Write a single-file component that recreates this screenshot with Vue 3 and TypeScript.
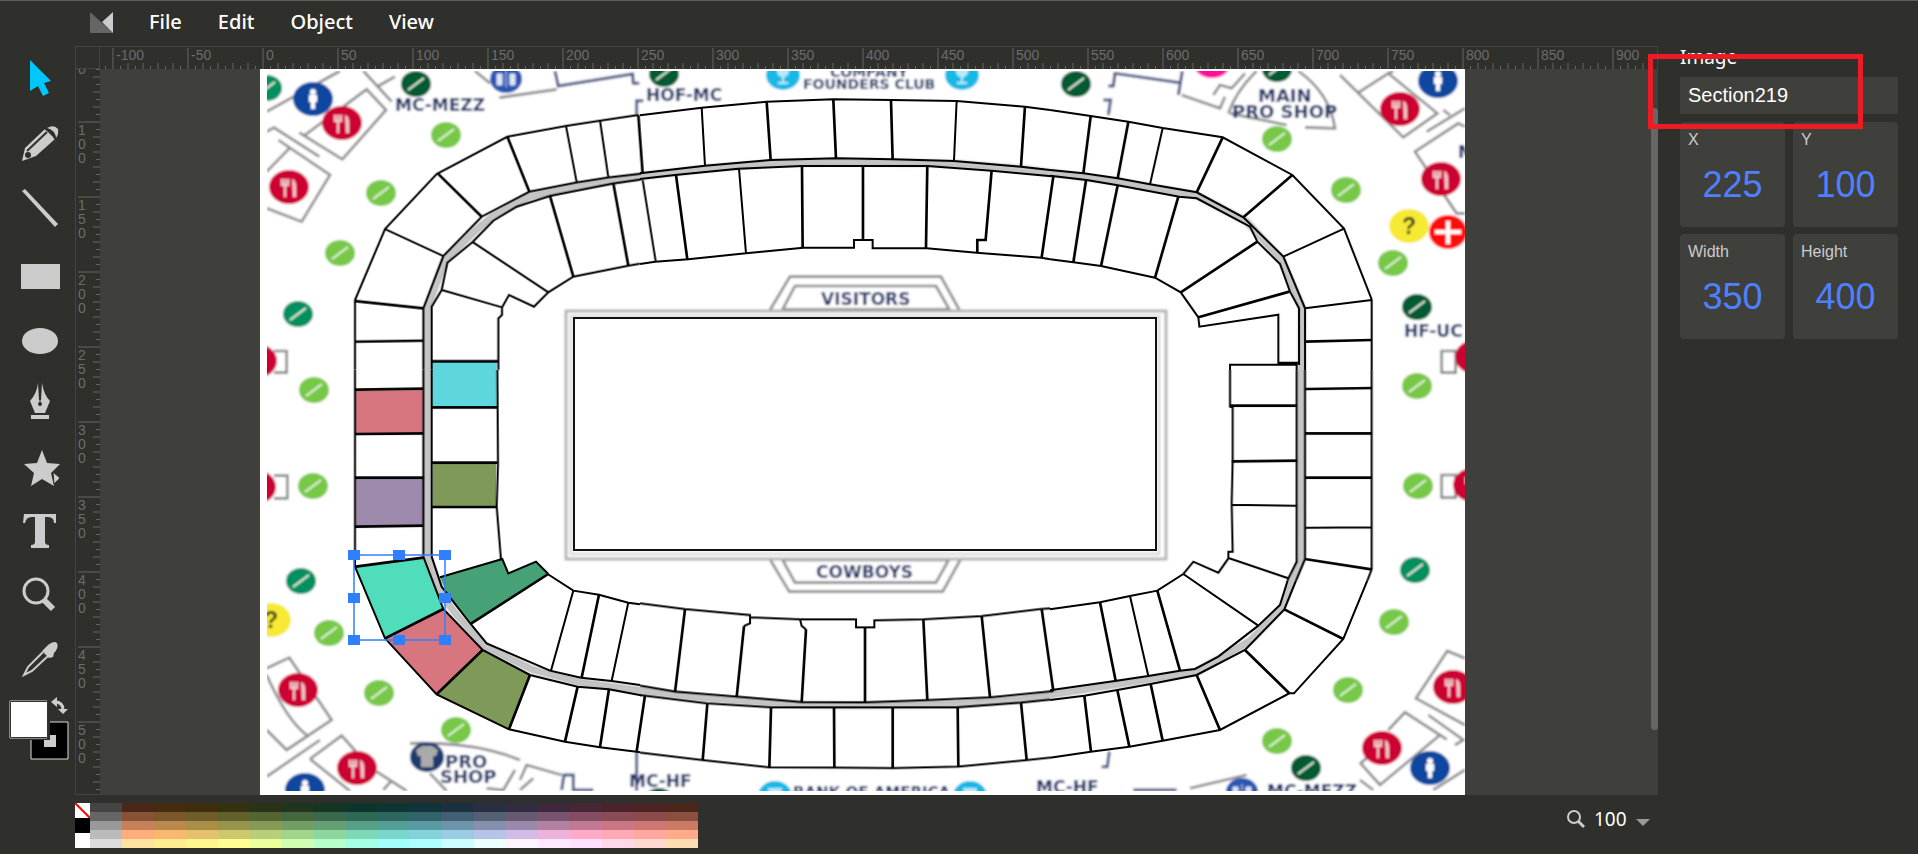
<script setup lang="ts">
import { ref } from 'vue'

interface Layer { x: number; y: number; thin?: string; bold?: string; aisle?: string; wall?: string; navy?: string }
interface Fill { x: number; y: number; color: string; points: string }
interface Label { x: number; y: number; size: number; text: string }

const menus = ['File', 'Edit', 'Object', 'View']
const tools = ['Select', 'Pencil', 'Line', 'Rectangle', 'Ellipse', 'Pen', 'Star', 'Text', 'Zoom', 'Eyedropper']
const active = ref('Select')
const title = ref('Section219')
const zoom = ref('100')
const fields = ref([
  { id: 'pos-x', label: 'X', value: '225' },
  { id: 'pos-y', label: 'Y', value: '100' },
  { id: 'size-w', label: 'Width', value: '350' },
  { id: 'size-h', label: 'Height', value: '400' }
])

const ticks = (from: number, to: number) => {
  const list: { v: number; kind: number }[] = []
  for (let v = from; v <= to; v += 5) list.push({ v, kind: v % 50 === 0 ? 2 : v % 10 === 0 ? 1 : 0 })
  return list
}
const acrossTicks = ticks(-105, 920)
const downTicks = ticks(50, 590)
const tickLength = [4, 7, 22]

const palette = [
  '#444 #4a2819 #462b10 #3e2e0f #34310f #2a3316 #20351d #173524 #0e352b #0d3532 #0f343a #1b3140 #282f41 #322c41 #40283c #472635 #4b242b #4c2424 #4b261a',
  '#666 #875236 #7d572c #705b2a #62602b #546432 #44673e #39684a #2f6855 #2f6660 #33636a #425f75 #546073 #655a72 #775470 #834e64 #8a4b57 #8d4a4c #8a4f3f',
  '#999 #c6815a #b9884c #a98e48 #98944b #869955 #739d65 #649f76 #589f87 #539e97 #5a9aa3 #6d95aa #8490ad #9a89ab #b081a1 #c17a93 #ca7784 #cd7775 #cb7b65',
  '#bbb #ffae7b #f9b76f #e6c16c #cec86d #b9ce79 #a1d589 #8cd79d #7dd8b5 #79d6cb #84d2da #9acce5 #b6c4e8 #d2bbe6 #ecb2da #ffaac8 #ffa8b6 #ffa8a0 #ffaa88',
  '#ddd #ffe3a0 #ffed90 #fff78d #fffe93 #ecff9d #d0ffb1 #b8ffcb #a6ffe5 #a2fffe #affffe #ccfeff #ecffff #fff4ff #ffe9ff #ffe0ff #ffd8e9 #ffd9cf #ffddb3'
].join(' ').split(' ')

const layers: Layer[] = [
  {
    x: 260, y: 60,
    thin: 'M285 930V720L375 507L530 342L742 230L918 198L1020 182L1135 165M490 930V745L550 588L665 470L808 395L950 367L1045 352L1143 341M375 507L550 588M918 198L950 367M1020 182L1045 352M515 930V740L545 690L562 608L638 546L700 482L770 440L870 408L1060 370L1143 358M715 930V775L726 765V742L747 705L822 740L865 697L940 650L1105 617L1140 611M545 690L726 742M638 546L865 697M1148 360L1187 604',
    bold: 'M285 723L490 745M285 845L490 842M535 342L665 470M742 230L808 395M1135 165L1148 341M870 408L940 650M1060 370L1105 617M515 904H715',
    aisle: 'M502 930V745L555 600L650 508L700 468L808 410L950 380L1140 351',
    wall: 'M20 155L240 33M135 225L320 88L378 150L247 298L118 218M310 33L395 125M355 78L405 50M20 215L42 203L178 290M55 240L210 345L125 485L20 445M88 265L20 335M718 113L890 88M645 33L690 70M42 873h38v65h-38',
    navy: 'M885 33L895 78L1118 42L1120 70H1138M1150 122H1130V165'
  },
  {
    x: 640, y: 60,
    thin: 'M0 166L185 143L380 125L580 118L755 120L950 123L1155 140L1230 150M0 340L195 317L392 300L590 295L758 298L942 303L1143 320L1230 330M0 357L105 345L295 326L485 318H862L1055 332L1235 349M0 612L45 605L145 598L318 580L490 563H642V540H698V565H860L1010 578L1205 593L1230 598M185 143L195 317M297 326L318 580M950 123L942 303',
    bold: 'M380 125L392 300M580 118L588 295M753 120L758 298M1155 140L1143 320M108 345L142 598M486 318L488 563M669 318V540M862 318L858 567M1055 332L1037 540H1012V578M1240 350L1205 593',
    aisle: 'M0 349L195 326L392 310L590 306L758 308L942 311L1143 327L1230 338',
    wall: 'M390 750L450 650H903L958 750M428 748L465 678H888L928 748Z'
  },
  {
    x: 1050, y: 60,
    thin: 'M0 150L122 168L235 185L338 204L518 232L727 345L882 506L965 718V930M0 330L100 340L203 355L300 373L440 397L580 472L700 590L765 745V930M338 204L300 373M882 506L700 590M965 720L765 745M0 347L110 360L203 376L388 410L440 415L600 500L622 545L690 612L720 695L747 745V915M0 598L70 607L153 618L315 653L392 697L445 772L448 800L685 764V908H747M540 930V914H740V930',
    bold: 'M122 168L100 340M235 185L203 355M518 232L440 397M727 345L580 472M765 845L965 840M108 360L70 607M203 376L153 618M385 410L315 653M622 545L392 697M718 695L445 772',
    aisle: 'M0 338L203 365L300 382L440 406L590 485L695 600L756 745V930',
    wall: 'M395 105L510 145L525 110M490 105L510 75L545 85L585 40M535 160Q560 90 620 33M745 33Q840 100 855 205L765 202M710 195L540 160M870 45L1060 232L1162 160L1015 40L925 98M1015 40L1030 33M1130 215L1245 145M1180 150L1200 165M1245 200L1225 190L1095 275L1220 460H1245M1175 873h42v65h-42Z',
    navy: 'M175 78H190L195 40L390 68M397 33L385 105M160 120H182L175 165'
  },
  {
    x: 260, y: 370,
    thin: 'M285 0V560M490 0V560M515 0V560M712 0L714 278L710 410L723 570',
    bold: 'M285 59L490 56M285 192L490 190M285 323H492M285 470L490 467M515 112H712M515 278H712M518 411H710',
    aisle: 'M502 0V555',
    wall: 'M42 317h40v68h-40'
  },
  {
    x: 260, y: 560,
    thin: 'M285 -10V20L375 235L530 403L747 508L915 545L1020 562L1130 575L1140 577M490 -10L550 147L668 270L810 345L953 380L1047 388L1143 406M515 -10L545 80L632 192L680 250L870 332L963 353L1055 363L1140 375M863 42L940 92L1017 104L1105 128L1140 133M540 52L727 -3L745 40L828 5L865 42M940 92L873 332M1105 128L1055 363',
    bold: 'M287 20L490 -7M550 147L375 235M668 270L530 403M810 345L747 508M953 380L915 545M1047 388L1020 562M1155 407L1130 575M1017 104L965 353M865 42L632 192',
    aisle: 'M502 -15L545 105L590 165L672 257L815 328L960 367L1140 391',
    wall: 'M20 325L88 293L215 480L80 570L20 510M20 345Q80 480 140 525M20 650L180 540M150 597L245 527L310 600M150 597L270 693M350 635L440 693M370 690L392 665M450 550Q650 545 780 600M510 640L560 693M765 630L730 690L680 685M780 660L800 615L905 645M820 655L780 690',
    navy: 'M905 690L912 645H940V690H1000M1130 575V693'
  },
  {
    x: 640, y: 540,
    thin: 'M0 190L135 207L330 225V250L312 258M332 232L480 238L485 258L498 268M480 238H648V262H703V241L850 238L1025 228L1200 207L1230 205M0 437L105 455L290 470L485 486L675 487L862 480L1050 472L1240 453M0 465L200 490L395 502H950L1143 488L1230 479M0 638L188 660L388 682L585 683L760 684L955 680L1160 660L1230 653',
    bold: 'M135 207L105 455M312 258L290 470M498 268L485 486M675 260V487M850 238L862 480M1025 228L1050 472M1205 207L1240 453M202 490L188 660M393 502L388 682M582 502L583 683M758 502V684M953 502L955 680M1143 488L1160 660',
    aisle: 'M0 451L200 475L485 494L675 496L950 492L1143 478L1230 466',
    wall: 'M390 58L448 155H908L962 58M428 60L465 128H888L926 60Z'
  },
  {
    x: 1050, y: 370,
    thin: 'M540 0V110L548 112V270L545 400L548 545H535V565L505 608L430 575L400 612M740 0V575L715 625L713 632M765 0V567L738 632M965 0V598L952 632M765 473L965 472M545 404L740 407M538 565L715 625',
    bold: 'M540 107H740M545 274L740 272M765 57L965 54M765 190H965M765 323H965M765 567L965 598',
    aisle: 'M753 0V570L727 632',
    wall: 'M1175 315h42v68h-42Z'
  },
  {
    x: 1050, y: 570,
    thin: 'M952 32L880 207L732 370H718L510 480L338 512L238 530L122 545L0 563M738 32L703 118L585 240L440 315L302 342L202 360L103 377L0 390M713 32L690 105L625 167L505 260L435 297L390 302L295 318L200 332L0 361M400 12L322 62L240 78L150 97L0 118M400 12L625 167M240 78L295 318',
    bold: 'M703 118L880 207M585 240L718 370M440 315L510 480M302 342L338 512M202 360L238 530M103 377L123 545M322 62L390 302M150 97L197 332',
    aisle: 'M727 32L697 112L600 213L440 306L0 375',
    wall: 'M420 655L590 615M1245 265L1192 243L1098 385L1245 465M1015 480L1065 427L1190 508M1170 495L990 645L932 580L960 555M1135 435L1240 510L1215 525M1245 600L1150 660M930 630L970 660',
    navy: 'M178 545L172 590H155M250 660H380'
  }
]

const fills: Fill[] = [
  { x: 260, y: 370, color: '#5dd6de', points: '515,-26 710,-26 710,108 515,110' },
  { x: 260, y: 370, color: '#d87680', points: '285,62 488,60 488,188 285,190' },
  { x: 260, y: 370, color: '#9e8aad', points: '287,326 492,326 490,467 287,470' },
  { x: 260, y: 370, color: '#7f9a58', points: '518,280 708,280 708,410 518,410' },
  { x: 260, y: 560, color: '#47a176', points: '540,52 727,-3 745,40 828,5 863,42 632,192 560,100' },
  { x: 260, y: 560, color: '#4fddbb', points: '287,20 490,-5 550,147 375,233' },
  { x: 260, y: 560, color: '#d87680', points: '375,233 550,150 668,270 530,403' },
  { x: 260, y: 560, color: '#7f9a58', points: '530,403 670,272 810,345 747,508' }
]

const light = '#78c846'
const mid = '#028f5f'
const dark = '#035a33'
const gates: [number, number, string][] = [
  [446, 135, light], [381, 193, light], [340, 253, light], [314, 390, light], [313, 486, light], [329, 633, light],
  [379, 693, light], [456, 730, light], [1277, 139, light], [1346, 190, light], [1393, 263, light], [1417, 386, light],
  [1418, 486, light], [1394, 622, light], [1348, 690, light], [1277, 741, light],
  [298, 314, mid], [301, 581, mid], [1415, 570, mid], [267, 88, mid],
  [416, 84, dark], [664, 74, dark], [1076, 84, dark], [1277, 69, dark], [1417, 307, dark], [1306, 768, dark], [659, 801, dark]
]
const food: [number, number][] = [
  [342, 123], [289, 187], [1400, 109], [1441, 179], [298, 690], [357, 768], [1453, 687], [1382, 748],
  [257, 361], [256, 487], [1475, 357], [1473, 485]
]
const people: [number, number][] = [[313, 99], [1438, 81], [305, 790], [1430, 768]]
const family: [number, number][] = [[506, 79], [1242, 792]]
const cups: [number, number][] = [[783, 75], [962, 75], [775, 796], [970, 796]]
const help: [number, number][] = [[1409, 226], [271, 620]]
const labels: Label[] = [
  { x: 395, y: 111, size: 17, text: 'MC-MEZZ' },
  { x: 646, y: 101, size: 17, text: 'HOF-MC' },
  { x: 830, y: 77, size: 14, text: 'COMPANY' },
  { x: 803, y: 89, size: 14, text: 'FOUNDERS CLUB' },
  { x: 1258, y: 102, size: 18, text: 'MAIN' },
  { x: 1232, y: 118, size: 18, text: 'PRO SHOP' },
  { x: 1404, y: 337, size: 17, text: 'HF-UC' },
  { x: 1458, y: 158, size: 17, text: 'M' },
  { x: 445, y: 768, size: 18, text: 'PRO' },
  { x: 440, y: 783, size: 18, text: 'SHOP' },
  { x: 629, y: 787, size: 17, text: 'MC-HF' },
  { x: 793, y: 798, size: 15, text: 'BANK OF AMERICA' },
  { x: 1036, y: 793, size: 17, text: 'MC-HF' },
  { x: 1267, y: 797, size: 17, text: 'MC-MEZZ' },
  { x: 821, y: 305, size: 17, text: 'VISITORS' },
  { x: 816, y: 578, size: 17, text: 'COWBOYS' }
]
const handles: [number, number][] = [
  [354, 555], [399, 555], [445, 555], [354, 598], [445, 598], [354, 640], [399, 640], [445, 640]
]
const place = (x: number, y: number) => `translate(${x} ${y}) scale(.3333)`
</script>

<template>
  <div class="editor">
    <nav class="menubar">
      <svg class="logo" viewBox="0 0 23 21" aria-hidden="true">
        <path d="M0 0V21H23Z" fill="#666" /><path d="M23 0V21L12 10Z" fill="#ccc" />
      </svg>
      <button v-for="m in menus" :key="m" type="button">{{ m }}</button>
    </nav>

    <aside class="toolbar">
      <button v-for="(t, i) in tools" :key="t" type="button" class="tool" :class="{ active: active === t }" :aria-label="t" @click="active = t">
        <svg :viewBox="`0 ${46 + i * 64} 75 64`" fill="currentColor">
          <path v-if="i === 0" d="M30 60V91L38 86L43 96L49 93L44 83L51 81Z" />
          <g v-else-if="i === 1">
            <path d="M22 161L25 148L45 129L55 139L36 156Z" />
            <path d="M47 128Q54 124 58 129Q59 134 56 138Q55 130 47 128Z" />
            <path d="M27 151L47 132" fill="none" stroke="#2f2f2c" stroke-width="2" />
            <path d="M45 129Q54 130 55 139" fill="none" stroke="#2f2f2c" stroke-width="2" />
            <circle cx="28" cy="155" r="3" fill="#2f2f2c" />
          </g>
          <path v-else-if="i === 2" d="M22 191L25 189L58 224L55 227Z" />
          <path v-else-if="i === 3" d="M21 264H60V289H21Z" />
          <ellipse v-else-if="i === 4" cx="40" cy="341" rx="18" ry="13" />
          <g v-else-if="i === 5">
            <path d="M38 383L39 400H41L42 383Q44 395 50 401L45 413H35L30 401Q37 393 38 383ZM31 415H49V419H31Z" />
            <path d="M40 385V403" stroke="#2f2f2c" stroke-width="1" /><circle cx="40" cy="404" r="2" fill="#2f2f2c" />
          </g>
          <g v-else-if="i === 6">
            <path d="M42 450L47 463L60 464L51 473L54 486L42 479L31 486L34 473L24 464L37 463Z" />
            <path d="M53 472L60 478L54 484Z" stroke="#2f2f2c" stroke-width="1" />
          </g>
          <path v-else-if="i === 7" d="M24 514H56V523H54Q54 517 48 517H45V542Q45 545 49 545V548H31V545Q35 545 35 542V517H32Q26 517 25 523H23Z" />
          <g v-else-if="i === 8" fill="none" stroke="currentColor">
            <circle cx="36" cy="591" r="12" stroke-width="3" /><path d="M44 600L53 609" stroke-width="6" />
          </g>
          <g v-else>
            <path d="M42 651L48 645Q54 640 57 643Q59 648 54 653L53 657L49 658L40 649Z" />
            <path d="M43 652L28 667L24 675L32 671L48 656" fill="none" stroke="currentColor" stroke-width="2" />
          </g>
        </svg>
      </button>
      <svg class="swatches" viewBox="0 686 75 80" role="img" aria-label="Fill and stroke colours">
        <path d="M31 722H68V759H31Z" stroke="#ddd" /><path d="M44 735H56V747H44Z" fill="#ccc" />
        <path d="M8 699H50V740H8Z" fill="#2f2f2c" />
        <path d="M10 701H47V738H10Z" fill="#fff" stroke="#ddd" /><path d="M10.5 701.5H47.500V737.500H10.500Z" fill="#fff" stroke="#333" stroke-width="1" />
        <path d="M55 702Q63 702 63 710" fill="none" stroke="#ccc" stroke-width="3" /><path d="M51 702L57 697V707ZM58 709H68L63 714Z" fill="#ccc" />
      </svg>
    </aside>

    <main class="workspace">
      <div class="corner"></div>
      <svg class="ruler-x" aria-hidden="true">
        <g v-for="t in acrossTicks" :key="t.v">
          <line :x1="163 + t.v * 1.5" :x2="163 + t.v * 1.5" :y1="23 - tickLength[t.kind]" y2="24" />
          <text v-if="t.kind === 2" :x="166 + t.v * 1.5" y="13">{{ t.v }}</text>
        </g>
      </svg>
      <svg class="ruler-y" aria-hidden="true">
        <g v-for="t in downTicks" :key="t.v">
          <line :y1="t.v * 1.5 - 97" :y2="t.v * 1.5 - 97" :x1="24 - tickLength[t.kind]" x2="24" />
          <template v-if="t.kind === 2">
            <text v-for="(d, n) in String(t.v)" :key="n" x="2" :y="t.v * 1.5 - 84 + n * 14">{{ d }}</text>
          </template>
        </g>
      </svg>
      <div class="canvas">
        <svg class="artboard" viewBox="260 69 1205 726" role="img" aria-label="Stadium seating map">
          <defs>
            <clipPath id="picture"><rect x="267" y="71" width="1198" height="720" /></clipPath>
            <filter id="soft" x="0" y="0" width="1" height="1"><feGaussianBlur stdDeviation="1" /></filter>
          </defs>
          <rect x="260" y="69" width="1205" height="726" fill="#fff" />
          <g clip-path="url(#picture)">
            <g filter="url(#soft)">
              <rect x="255" y="60" width="1222" height="745" fill="#fff" />
              <g v-for="(l, i) in layers" :key="i" :transform="place(l.x, l.y)" fill="none">
                <path v-if="l.wall" :d="l.wall" stroke="#888" stroke-width="8" />
                <path v-if="l.navy" :d="l.navy" stroke="#4a5685" stroke-width="9" />
              </g>
              <rect x="566" y="311" width="600" height="248" fill="none" stroke="#b4b4b4" stroke-width="3" />
              <rect x="571" y="316" width="588" height="238" fill="none" stroke="#ddd" stroke-width="3" />
              <g v-for="(g, i) in gates" :key="i" :transform="`translate(${g[0]} ${g[1]})`">
                <ellipse rx="15" ry="13" :fill="g[2]" /><path d="M-8 6L8 -6" stroke="#e4f4df" stroke-width="2" />
              </g>
              <g v-for="(p, i) in people" :key="i" :transform="`translate(${p[0]} ${p[1]})`">
                <ellipse rx="20" ry="17" fill="#0f47a0" /><circle cy="-7" r="3" fill="#fff" /><path d="M-4 -4H4V3H2V10H-2V3H-4Z" fill="#fff" />
              </g>
              <g v-for="(p, i) in family" :key="i" :transform="`translate(${p[0]} ${p[1]})`">
                <ellipse rx="16" ry="14" fill="#2a55b0" /><path d="M-9 -5H-4V6H-9ZM4 -5H9V6H4ZM0 -8V8" fill="#dfe8f8" stroke="#dfe8f8" />
              </g>
              <g v-for="(p, i) in food" :key="i" :transform="`translate(${p[0]} ${p[1]})`">
                <ellipse rx="20" ry="17" fill="#cc0033" />
                <path d="M-7 -8V-2H-1V-8M-4 -8V10" stroke="#f5c9d2" stroke-width="2" fill="none" /><path d="M3 -8Q7 -7 7 0V10H4Z" fill="#f5c9d2" />
              </g>
              <g v-for="(p, i) in cups" :key="i" :transform="`translate(${p[0]} ${p[1]})`">
                <ellipse rx="17" ry="15" fill="#13b9e6" /><path d="M-7 -8H7Q6 2 1 2V7H5V9H-5V7H-1V2Q-6 2 -7 -8Z" fill="#b9eaf8" />
              </g>
              <g v-for="(p, i) in help" :key="i" :transform="`translate(${p[0]} ${p[1]})`">
                <ellipse rx="20" ry="17" fill="#f6ea35" /><text class="question" y="8">?</text>
              </g>
              <ellipse cx="1212" cy="64" rx="18" ry="14" fill="#ff0a9c" />
              <ellipse cx="1448" cy="232" rx="19" ry="17" fill="#ff1010" /><path d="M1435 232H1461M1448 221V244" stroke="#fff" stroke-width="4" />
              <ellipse cx="427" cy="757" rx="17" ry="15" fill="#1b3a70" />
              <path d="M416 750L422 746H432L438 750L436 756H433V767H421V756H418Z" fill="#aaa" />
              <text v-for="(l, i) in labels" :key="i" class="place" :x="l.x" :y="l.y" :font-size="l.size">{{ l.text }}</text>
              <g v-for="(l, i) in layers" :key="`a${i}`" :transform="place(l.x, l.y)" fill="none">
                <path :d="l.aisle" stroke="#b4b4b4" stroke-width="22" />
                <path :d="l.aisle" stroke="#cfcfcf" stroke-width="7" />
              </g>
            </g>
            <rect x="574" y="318" width="582" height="232" fill="#fff" stroke="#111" stroke-width="2" />
            <polygon v-for="(f, i) in fills" :key="i" :transform="place(f.x, f.y)" :points="f.points" :fill="f.color" />
            <g v-for="(l, i) in layers" :key="`l${i}`" :transform="place(l.x, l.y)" fill="none" stroke="#000">
              <path :d="l.thin" stroke-width="6" /><path :d="l.bold" stroke-width="8" />
            </g>
          </g>
          <g fill="#2f80ff">
            <rect x="354" y="555" width="91" height="85" fill="none" stroke="#2f80ff" stroke-width="1.500" />
            <rect v-for="(h, i) in handles" :key="i" :x="h[0] - 6" :y="h[1] - 5" width="12" height="10" />
          </g>
        </svg>
        <div class="scrollbar"></div>
      </div>
    </main>

    <section class="panel">
      <h2><label for="title">Image</label></h2>
      <input id="title" v-model="title" class="name" type="text" />
      <div class="cells">
        <div v-for="f in fields" :key="f.id" class="cell">
          <label :for="f.id">{{ f.label }}</label>
          <input :id="f.id" v-model="f.value" type="text" />
        </div>
      </div>
      <div class="callout"></div>
    </section>

    <footer class="bottom">
      <div class="basics">
        <button type="button" class="none" aria-label="No colour"><svg viewBox="0 0 15 15"><path d="M0 0L15 15" stroke="#f00" stroke-width="2" /></svg></button>
        <button type="button" class="black" aria-label="Black"></button>
        <button type="button" class="white" aria-label="White"></button>
      </div>
      <div class="palette">
        <button v-for="(c, i) in palette" :key="i" type="button" :style="{ background: c }" :aria-label="c"></button>
      </div>
      <div class="zoom">
        <label for="zoom" aria-label="Zoom level">
          <svg viewBox="0 0 20 20" fill="none" stroke="#ccc"><circle cx="8" cy="8" r="6" stroke-width="2" /><path d="M12 12L18 18" stroke-width="3" /></svg>
        </label>
        <input id="zoom" v-model="zoom" type="text" />
        <button type="button" aria-label="Zoom presets"><svg viewBox="0 0 14 7"><path d="M0 0H14L7 7Z" fill="#999" /></svg></button>
      </div>
    </footer>
  </div>
</template>

<style>
body { background: #2f2f2c; }
</style>

<style scoped>
.editor {
  box-sizing: border-box;
  display: grid;
  grid-template: 45px minmax(0, 1fr) 59px / 75px minmax(0, 1fr) 260px;
  height: 100vh;
  border-top: 1px solid #5c5e5e;
  background: #2f2f2c;
  color: #fff;
  font-family: "Liberation Sans", sans-serif;
}
button { border: 0; padding: 0; background: none; color: inherit; font: inherit; }
input { box-sizing: border-box; min-width: 0; border: 0; padding: 0; background: none; color: inherit; font: inherit; }
svg { display: block; }
.menubar { grid-column: 1 / -1; display: flex; align-items: center; gap: 36px; padding: 0 0 3px 90px; font: 500 20px/28px "Noto Sans", sans-serif; }
.logo { width: 23px; height: 21px; }
.toolbar { grid-row: 2 / 4; }
.tool { display: block; width: 75px; height: 64px; color: #ccc; }
.tool.active { color: #00c8ff; }
.swatches { width: 75px; height: 80px; }
.workspace { display: grid; grid-template: 23px minmax(0, 1fr) / 25px minmax(0, 1fr); }
.corner { border: 1px solid #444; }
.ruler-x { box-sizing: border-box; width: 100%; height: 23px; border-top: 1px solid #444; border-right: 1px solid #444; font-size: 14px; }
.ruler-y { box-sizing: border-box; width: 25px; height: 100%; border-left: 1px solid #444; border-bottom: 1px solid #444; font-size: 14px; }
.ruler-x line, .ruler-y line { stroke: #666; }
.ruler-x text, .ruler-y text { fill: #6c6c6c; }
.canvas { position: relative; overflow: hidden; background: #3f3f3c; }
.artboard { width: 1205px; margin-left: 160px; }
.scrollbar { position: absolute; right: 0; top: 39px; bottom: 65px; width: 7px; border-radius: 4px; background: #666; }
.place { fill: #1d2f66; font-family: "DejaVu Sans", sans-serif; font-weight: bold; }
.question { fill: #333018; font-size: 23px; font-weight: bold; text-anchor: middle; }
.panel { position: relative; padding: 0 20px 0 22px; }
h2 { margin: 0; height: 31px; font: 19px/22px "Noto Sans", sans-serif; }
.name { width: 100%; height: 37px; padding: 0 8px; background: #3f3f3c; font-size: 20px; }
.cells { display: grid; grid-template-columns: 1fr 1fr; gap: 7px 8px; margin-top: 8px; }
.cell { display: flex; flex-direction: column; height: 105px; border-radius: 4px; background: #3f3f3c; }
.cell label { padding: 8px 8px 0; color: #ccc; font-size: 16px; line-height: 20px; }
.cell input { width: 100%; height: 70px; color: #4f80ff; font-size: 36px; text-align: center; }
.callout { position: absolute; left: -10px; top: 8px; width: 205px; height: 65px; border: 5px solid #ed1c24; pointer-events: none; }
.bottom { grid-column: 2 / 4; display: flex; align-items: flex-start; padding-top: 8px; }
.basics { display: flex; flex-direction: column; width: 15px; }
.basics button { height: 15px; }
.none, .white { background: #fff; }
.black { background: #000; }
.palette { display: grid; grid-template-columns: repeat(19, 32px); grid-auto-rows: 9px; }
.zoom { display: flex; align-items: center; gap: 8px; margin: 2px 268px 0 auto; font: 19px "Noto Sans", sans-serif; }
.zoom input { width: 34px; height: 28px; }
.zoom label svg { width: 20px; height: 20px; }
.zoom button svg { width: 14px; height: 7px; margin-top: 6px; }
</style>
